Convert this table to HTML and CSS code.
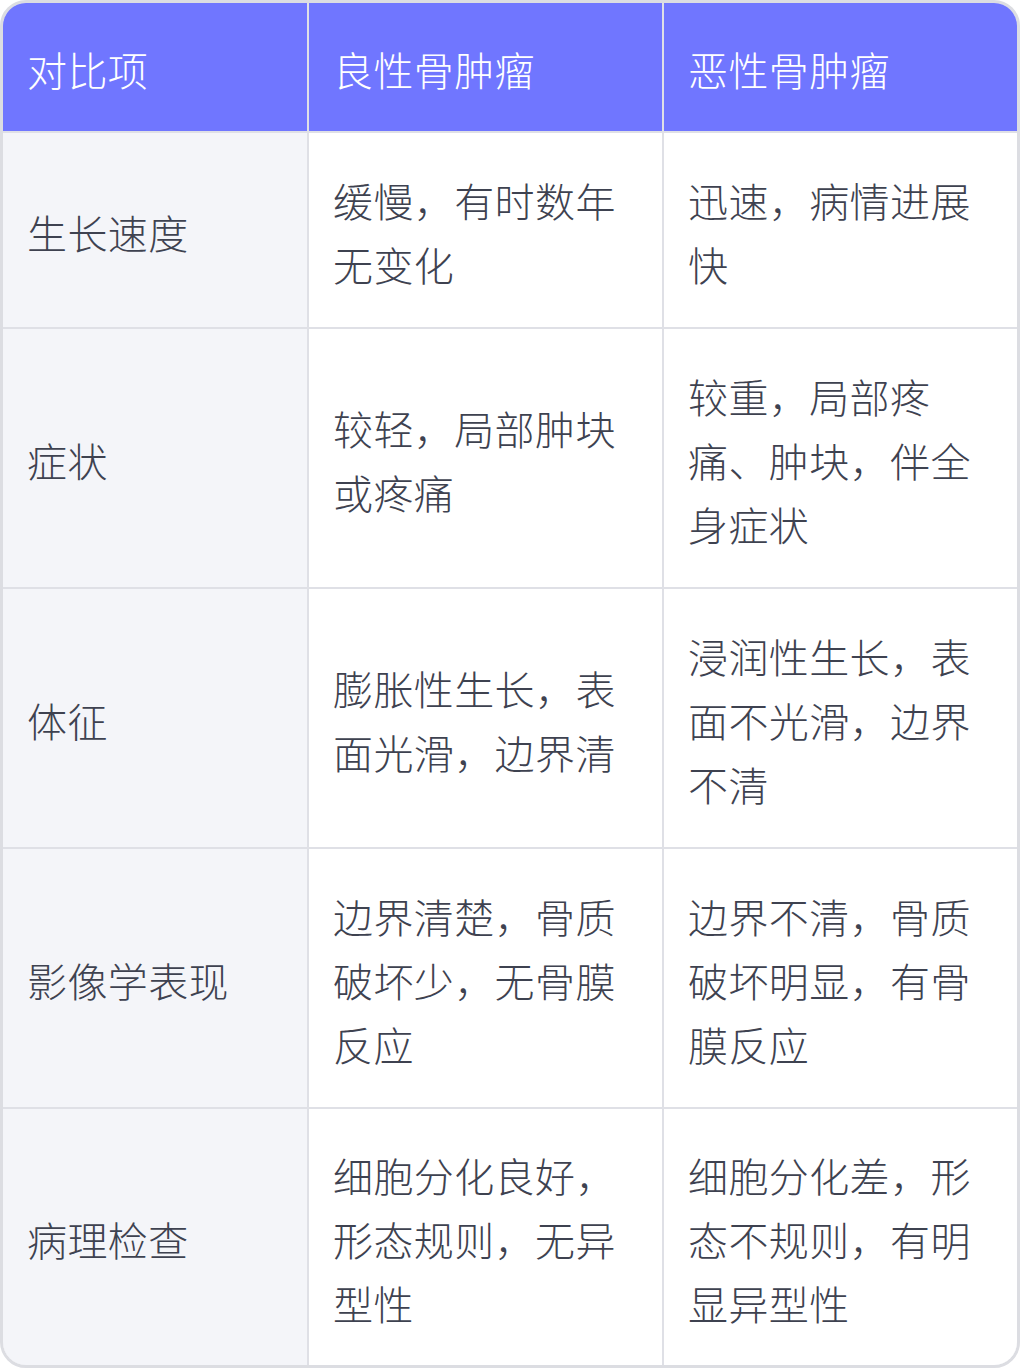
FILE: index.html
```html
<!DOCTYPE html>
<html lang="zh-CN">
<head>
<meta charset="utf-8">
<title>良性与恶性骨肿瘤对比</title>
<link rel="stylesheet" href="styles.css">
</head>
<body>
<div class="table-wrap">
  <div class="grid">
    <div class="cell head">对比项</div>
    <div class="cell head">良性骨肿瘤</div>
    <div class="cell head">恶性骨肿瘤</div>

    <div class="cell label">生长速度</div>
    <div class="cell">缓慢，有时数年无变化</div>
    <div class="cell">迅速，病情进展快</div>

    <div class="cell label">症状</div>
    <div class="cell">较轻，局部肿块或疼痛</div>
    <div class="cell">较重，局部疼痛、肿块，伴全身症状</div>

    <div class="cell label">体征</div>
    <div class="cell">膨胀性生长，表面光滑，边界清</div>
    <div class="cell">浸润性生长，表面不光滑，边界不清</div>

    <div class="cell label">影像学表现</div>
    <div class="cell">边界清楚，骨质破坏少，无骨膜反应</div>
    <div class="cell">边界不清，骨质破坏明显，有骨膜反应</div>

    <div class="cell label">病理检查</div>
    <div class="cell">细胞分化良好，形态规则，无异型性</div>
    <div class="cell">细胞分化差，形态不规则，有明显异型性</div>
  </div>
</div>
</body>
</html>
```
FILE: styles.css
```css
html, body {
  margin: 0;
  padding: 0;
  background: #ffffff;
}

.table-wrap {
  box-sizing: border-box;
  width: 1020px;
  height: 1368px;
  border: 3px solid #dcdde2;
  border-radius: 26px;
  overflow: hidden;
  background: #dfe0e6;
}

.grid {
  display: grid;
  grid-template-columns: 304px 353px 353px;
  grid-template-rows: 128px 194px 258px 258px 258px 256px;
  gap: 2px;
  background: #dfe0e6;
}

.cell {
  display: flex;
  align-items: center;
  padding: 4px 22px 0 24px;
  background: #ffffff;
  color: #3e4250;
  font-family: "Noto Sans CJK SC", "Noto Sans", sans-serif;
  font-weight: 300;
  font-size: 40px;
  line-height: 64px;
  letter-spacing: 0.4px;
}

.cell.head {
  background: #7076ff;
  color: #ffffff;
}

.cell.label {
  background: #f4f5f9;
}
```
